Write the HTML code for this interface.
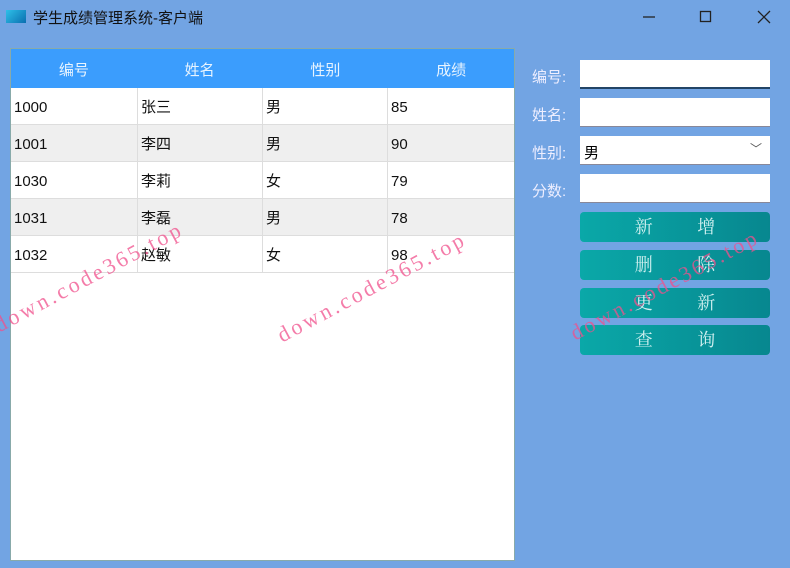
<!DOCTYPE html>
<html><head><meta charset="utf-8"><style>
body{margin:0;width:790px;height:568px;background:#72a4e3;font-family:"Liberation Sans","Noto Sans CJK SC",sans-serif;position:relative;overflow:hidden}
.t{position:absolute;left:33px;top:7px;font-size:15px;color:#111}
.ic{position:absolute;left:6px;top:10px;width:20px;height:13px;background:linear-gradient(135deg,#2ec0e8,#0a6fb0)}
.tbl{position:absolute;left:10px;top:48px;width:503px;height:511px;background:#fff;border:1px solid #8aa}
.hd{height:39px;background:#3b9dfd;display:flex;color:#e8f4ff;font-size:15px}
.hd div{flex:1;text-align:center;line-height:43px}
.r{height:36px;border-bottom:1px solid #ddd;display:flex;font-size:15px;color:#111}
.r.g{background:#efefef}
.r div{width:125px;border-right:1px solid #ddd;padding-left:3px;line-height:40px;box-sizing:border-box}
.r div:first-child{width:127px}
.r div:last-child{border:none}
.lb{position:absolute;left:532px;font-size:15px;color:#eef}
.in{position:absolute;left:580px;width:190px;height:29px;background:#fff;border-bottom:1px solid #889;box-sizing:border-box}
.bt{position:absolute;left:580px;width:190px;height:30px;border-radius:4px;background:linear-gradient(90deg,#0aa8a8,#07878f);color:#d0f0f0;font-family:"Liberation Serif","Noto Serif CJK SC",serif;font-size:18px;line-height:30px;text-align:center;word-spacing:40px}
.wm{position:absolute;color:rgba(240,80,140,.75);font-family:"Liberation Serif",serif;font-size:22px;transform:rotate(-28deg);transform-origin:left bottom;white-space:nowrap;letter-spacing:3px}
</style></head><body>
<div class="ic"></div><div class="t">学生成绩管理系统-客户端</div>
<svg style="position:absolute;left:0;top:0" width="790" height="30" fill="none" stroke="#222" stroke-width="1.3">
<path d="M643 17H655"/><rect x="700.5" y="11.5" width="10" height="10"/><path d="M758 11L770 23M770 11L758 23"/></svg>
<div class="tbl">
<div class="hd"><div>编号</div><div>姓名</div><div>性别</div><div>成绩</div></div>
<div class="r"><div>1000</div><div>张三</div><div>男</div><div>85</div></div>
<div class="r g"><div>1001</div><div>李四</div><div>男</div><div>90</div></div>
<div class="r"><div>1030</div><div>李莉</div><div>女</div><div>79</div></div>
<div class="r g"><div>1031</div><div>李磊</div><div>男</div><div>78</div></div>
<div class="r"><div>1032</div><div>赵敏</div><div>女</div><div>98</div></div>
</div>
<div class="lb" style="top:66px">编号:</div>
<div class="lb" style="top:104px">姓名:</div>
<div class="lb" style="top:142px">性别:</div>
<div class="lb" style="top:180px">分数:</div>
<div class="in" style="top:60px;border-bottom:2px solid #246"></div>
<div class="in" style="top:98px"></div>
<div class="in" style="top:136px;font-size:15px;padding:6px 4px">男<span style="position:absolute;right:8px;top:4px;color:#555;font-size:12px">﹀</span></div>
<div class="in" style="top:174px"></div>
<div class="bt" style="top:212px">新 增</div>
<div class="bt" style="top:250px">删 除</div>
<div class="bt" style="top:288px">更 新</div>
<div class="bt" style="top:325px">查 询</div>
<div class="wm" style="left:2px;top:312px">down.code365.top</div>
<div class="wm" style="left:285px;top:322px">down.code365.top</div>
<div class="wm" style="left:578px;top:320px">down.code365.top</div>
</body></html>
